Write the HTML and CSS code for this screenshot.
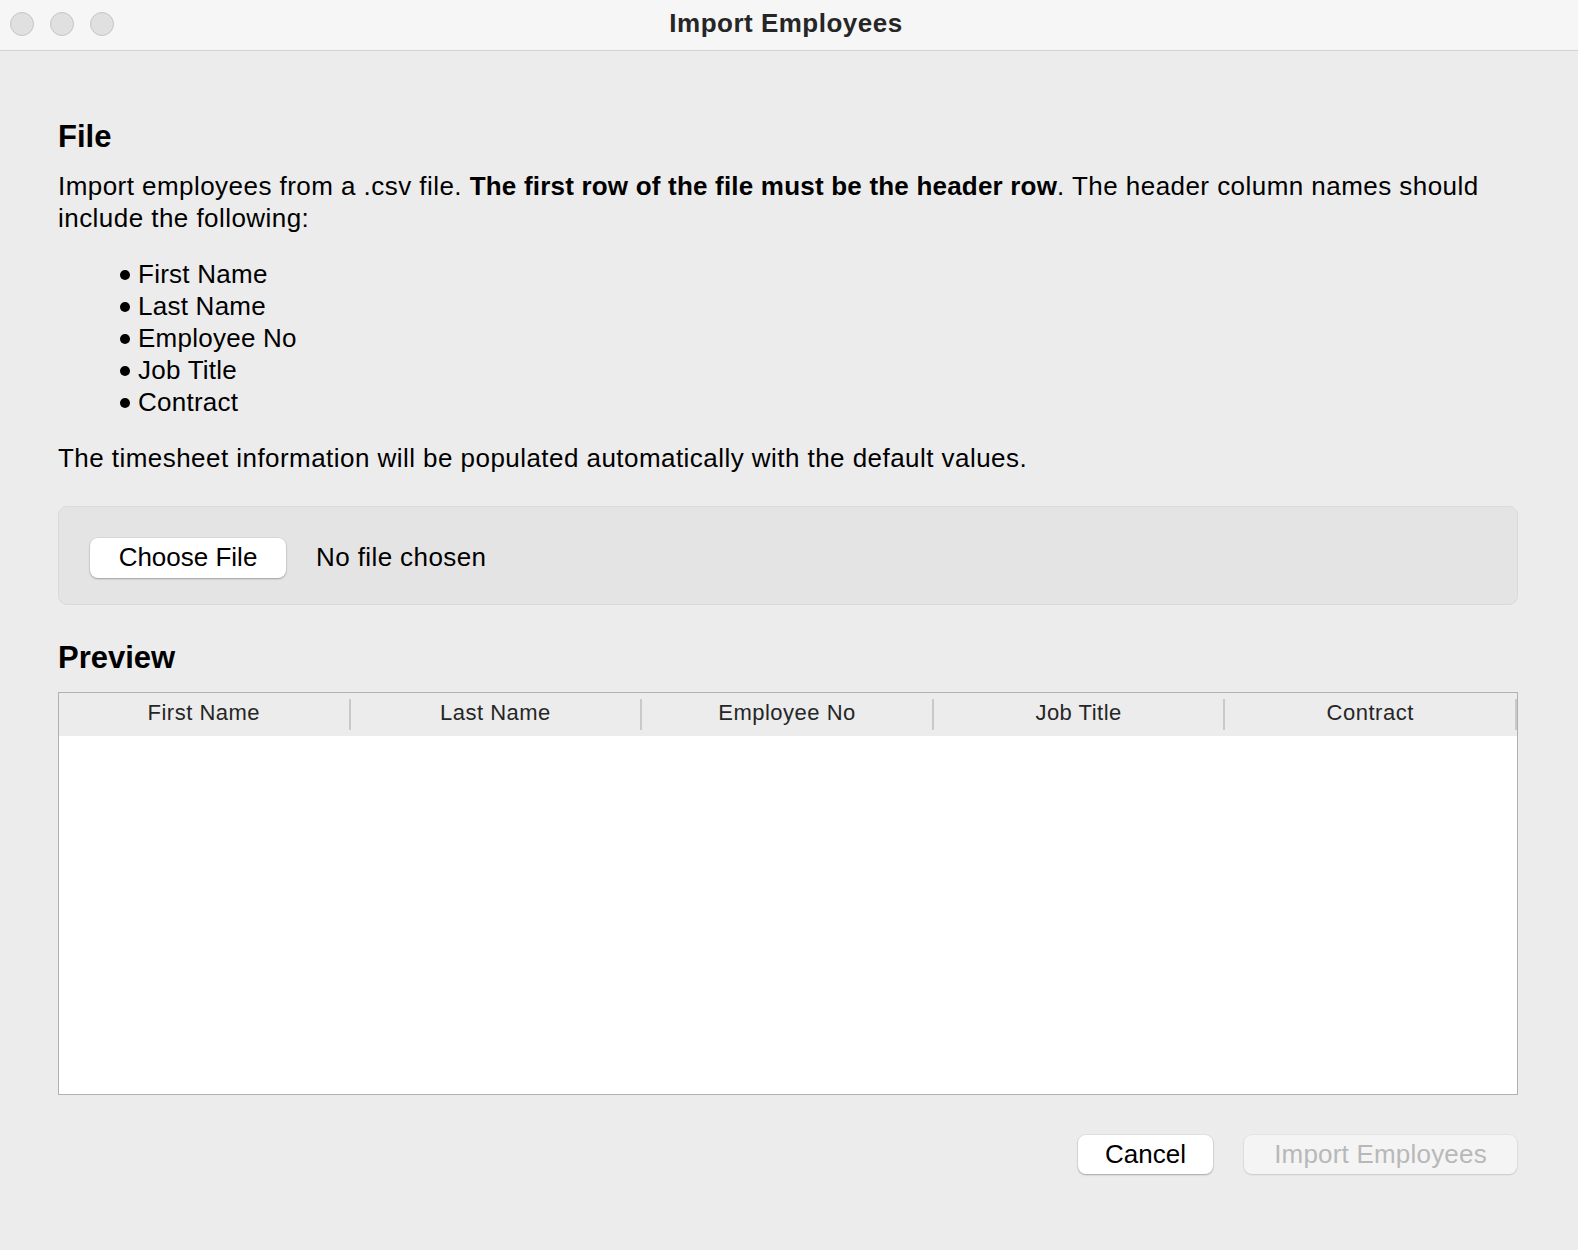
FILE: index.html
```html
<!DOCTYPE html>
<html lang="en">
<head>
<meta charset="utf-8">
<title>Import Employees</title>
<link rel="stylesheet" href="styles.css">
</head>
<body>
<div class="window">
  <header class="titlebar">
    <div class="lights">
      <span class="light"></span>
      <span class="light"></span>
      <span class="light"></span>
    </div>
    <div class="title">Import Employees</div>
    <div></div>
  </header>
  <main class="content">
    <h2 class="heading">File</h2>
    <p class="para intro">Import employees from a .csv file. <b>The first row of the file must be the header row</b>. The header column names should include the following:</p>
    <ul class="fields">
      <li>First Name</li>
      <li>Last Name</li>
      <li>Employee No</li>
      <li>Job Title</li>
      <li>Contract</li>
    </ul>
    <p class="para note">The timesheet information will be populated automatically with the default values.</p>
    <div class="filebox">
      <button class="btn choose">Choose File</button>
      <span class="nofile">No file chosen</span>
    </div>
    <h2 class="heading preview-h">Preview</h2>
    <div class="table">
      <div class="thead">
        <div class="th">First Name</div>
        <div class="th">Last Name</div>
        <div class="th">Employee No</div>
        <div class="th">Job Title</div>
        <div class="th">Contract</div>
      </div>
      <div class="tbody"></div>
    </div>
    <div class="footer">
      <button class="btn cancel">Cancel</button>
      <button class="btn import" disabled>Import Employees</button>
    </div>
  </main>
</div>
</body>
</html>
```
FILE: styles.css
```css
* { box-sizing: border-box; }
html, body { margin: 0; padding: 0; }
body {
  background: #ececec;
  font-family: "Liberation Sans", Arial, sans-serif;
  color: #000;
}
.window {
  width: 1578px;
  height: 1250px;
  background: #ececec;
  display: flex;
  flex-direction: column;
}
.titlebar {
  height: 51px;
  flex: none;
  background: #f6f6f6;
  border-bottom: 1px solid #d3d3d3;
  display: grid;
  grid-template-columns: 1fr auto 1fr;
  align-items: center;
}
.lights {
  display: flex;
  gap: 16px;
  padding-left: 10px;
  padding-bottom: 2px;
}
.light {
  width: 24px;
  height: 24px;
  border-radius: 50%;
  background: #e0e0e0;
  border: 1px solid #c6c6c6;
}
.title {
  font-weight: bold;
  font-size: 26px;
  letter-spacing: 0.5px;
  color: #262626;
  padding-bottom: 4px;
  padding-right: 6px;
}
.content {
  padding: 68px 60px 0 58px;
  display: flex;
  flex-direction: column;
}
.heading {
  margin: 0;
  font-size: 31px;
  line-height: 36px;
  font-weight: bold;
}
.para {
  margin: 0;
  font-size: 26px;
  line-height: 32px;
  letter-spacing: 0.45px;
}
.para b { letter-spacing: 0.2px; }
.intro { margin-top: 15px; }
.fields {
  list-style: none;
  margin: 24px 0 0 0;
  padding: 0 0 0 62px;
  font-size: 26px;
  line-height: 32px;
  letter-spacing: 0.25px;
}
.fields li { display: flex; align-items: center; }
.fields li::before {
  content: "";
  width: 10px;
  height: 10px;
  border-radius: 50%;
  background: #000;
  margin-right: 8px;
  margin-top: 2px;
}
.note { margin-top: 24px; }
.filebox {
  margin-top: 32px;
  height: 99px;
  background: #e4e4e4;
  border: 1px solid #dadada;
  border-radius: 9px;
  display: flex;
  align-items: center;
  padding: 4px 0 0 31px;
  gap: 30px;
}
.btn {
  font-family: inherit;
  font-size: 26px;
  border: none;
  border-radius: 8px;
  background: #fff;
  color: #000;
  box-shadow: 0 1px 2px rgba(0,0,0,0.28), 0 0 0 1px rgba(0,0,0,0.04);
  height: 40px;
  padding: 0;
}
.choose { width: 196px; }
.nofile { font-size: 26px; letter-spacing: 0.4px; }
.preview-h { margin-top: 35px; }
.table {
  margin-top: 16px;
  height: 403px;
  border: 1px solid #b1b1b1;
  display: flex;
  flex-direction: column;
  background: #fff;
}
.thead {
  height: 43px;
  background: #ececec;
  display: grid;
  grid-template-columns: repeat(5, 1fr);
  align-items: center;
}
.th {
  font-size: 22px;
  letter-spacing: 0.5px;
  color: #262626;
  text-align: center;
  height: 31px;
  line-height: 27px;
  border-right: 2px solid #c9c9c9;
}
.tbody { flex: 1; background: #fff; }
.footer {
  margin-top: 40px;
  display: flex;
  justify-content: flex-end;
  gap: 31px;
  padding-right: 1px;
}
.cancel { width: 135px; height: 39px; }
.import {
  width: 273px;
  height: 39px;
  background: #f4f4f4;
  color: #b8b8b8;
  letter-spacing: 0.2px;
  box-shadow: 0 1px 2px rgba(0,0,0,0.12), 0 0 0 1px rgba(0,0,0,0.03);
}
```
